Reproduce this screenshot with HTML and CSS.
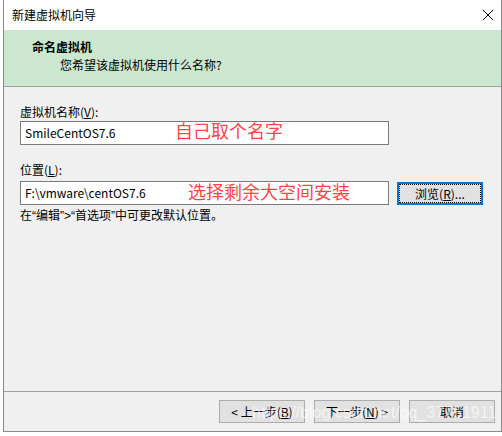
FILE: index.html
```html
<!DOCTYPE html>
<html lang="zh-CN">
<head>
    <meta charset="UTF-8">
    <title>新建虚拟机向导</title>
    <link rel="stylesheet" href="styles.css">
</head>
<body>
    <div class="window">
        <div class="titlebar">
            <span class="title">新建虚拟机向导</span>
            <svg class="close" width="12" height="12" viewBox="0 0 12 12">
                <path d="M1 1 L11 11 M11 1 L1 11" stroke="#000" stroke-width="1" fill="none"/>
            </svg>
        </div>
        <div class="header">
            <div class="header-title">命名虚拟机</div>
            <div class="header-sub">您希望该虚拟机使用什么名称?</div>
        </div>
        <div class="content">
            <div class="label">虚拟机名称(<u>V</u>):</div>
            <div class="row">
                <div class="field">SmileCentOS7.6</div>
            </div>
            <div class="label label-gap">位置(<u>L</u>):</div>
            <div class="row row-tight">
                <div class="field">F:\vmware\centOS7.6</div>
                <button class="btn browse"><span class="focus">浏览(<u>R</u>)...</span></button>
            </div>
            <div class="hint">在<span class="q">“</span>编辑<span class="q">”&gt;“</span>首选项<span class="q">”</span>中可更改默认位置。</div>
            <div class="note note-name">自己取个名字</div>
            <div class="note note-path">选择剩余大空间安装</div>
        </div>
        <div class="footer">
            <button class="btn">&lt; 上一步(<u>B</u>)</button>
            <button class="btn">下一步(<u>N</u>) &gt;</button>
            <button class="btn">取消</button>
            <div class="watermark">https://blog.csdn.net/qq_37751911</div>
        </div>
    </div>
</body>
</html>
```

FILE: styles.css
```css
* { margin: 0; padding: 0; box-sizing: border-box; }
body {
    background: #fff;
    width: 502px;
    height: 436px;
    overflow: hidden;
    font-family: "Noto Sans CJK SC", "Noto Sans", sans-serif;
    font-size: 12px;
    color: #000;
}
u { text-decoration: underline; text-underline-offset: 1px; }
.window {
    margin-left: 3px;
    width: 499px;
    height: 432px;
    border-left: 1px solid #8a8a8a;
    border-right: 1px solid #8a8a8a;
    border-bottom: 1px solid #8a8a8a;
    display: flex;
    flex-direction: column;
    background: #f0f0f0;
}
.titlebar {
    height: 30px;
    background: #fff;
    display: flex;
    align-items: center;
    justify-content: space-between;
    padding: 0 7px 0 8px;
}
.title { line-height: 16px; }
.close { display: block; }
.header {
    height: 57px;
    background: #cce7cf;
    border-bottom: 1px solid #a0a0a0;
    padding: 9px 0 0 28px;
}
.header-title { font-weight: bold; line-height: 16px; }
.header-sub { line-height: 16px; margin: 2px 0 0 28px; }
.content {
    flex: 1;
    position: relative;
    padding: 17px 0 0 16px;
}
.label { line-height: 16px; }
.label-gap { margin-top: 17px; }
.row {
    display: flex;
    align-items: center;
    margin-top: 1px;
}
.row-tight { margin-top: 3px; }
.field {
    width: 369px;
    height: 24px;
    background: #fff;
    border: 1px solid #7a7a7a;
    padding-left: 4px;
    line-height: 22px;
}
.btn {
    width: 86px;
    height: 23px;
    background: #e1e1e1;
    border: 1px solid #adadad;
    font-family: inherit;
    font-size: 12px;
    color: #000;
    line-height: 20px;
}
.browse {
    margin-left: 8px;
    border: 2px solid #0078d7;
    padding: 0;
}
.focus {
    display: block;
    height: 100%;
    border: 1px dotted #000;
    line-height: 17px;
}
.hint { line-height: 16px; margin-top: 2px; }
.q { font-family: "Liberation Sans", sans-serif; }
.note {
    position: absolute;
    color: #ff4444;
    font-size: 18px;
    line-height: 20px;
}
.note-name { left: 171px; top: 33px; }
.note-path { left: 184px; top: 94px; }
.footer {
    position: relative;
    height: 40px;
    border-top: 1px solid #a0a0a0;
    display: flex;
    justify-content: flex-end;
    align-items: flex-start;
    gap: 9px;
    padding: 8px 6px 0 0;
}
.watermark {
    position: absolute;
    left: 248px;
    top: 12px;
    font-family: "Liberation Sans", sans-serif;
    font-size: 16px;
    line-height: 18px;
    color: rgba(255, 255, 255, 0.65);
    white-space: nowrap;
}
```
